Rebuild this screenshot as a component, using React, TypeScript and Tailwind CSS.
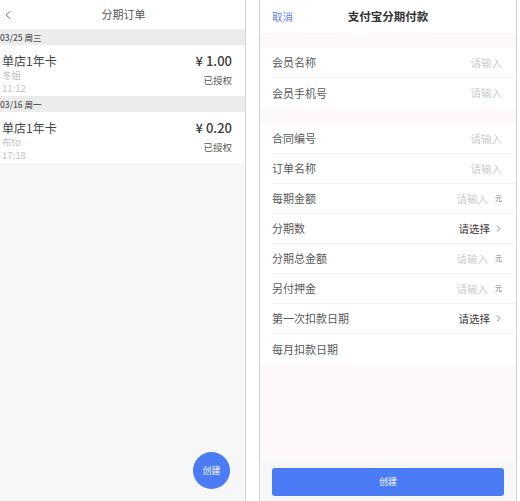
import { ChevronLeft, ChevronRight } from 'lucide-react';

const font = { fontFamily: '"Noto Sans CJK SC", "Noto Sans", sans-serif' };

interface Order {
    date: string;
    name: string;
    member: string;
    time: string;
    price: string;
}

const orders: Order[] = [
    { date: '03/25 周三', name: '单店1年卡', member: '冬姐', time: '11:12', price: '¥ 1.00' },
    { date: '03/16 周一', name: '单店1年卡', member: '布to', time: '17:18', price: '¥ 0.20' },
];

type Row = { label: string; kind: 'input' | 'yuan' | 'select' | 'none' };

const group1: Row[] = [
    { label: '会员名称', kind: 'input' },
    { label: '会员手机号', kind: 'input' },
];

const group2: Row[] = [
    { label: '合同编号', kind: 'input' },
    { label: '订单名称', kind: 'input' },
    { label: '每期金额', kind: 'yuan' },
    { label: '分期数', kind: 'select' },
    { label: '分期总金额', kind: 'yuan' },
    { label: '另付押金', kind: 'yuan' },
    { label: '第一次扣款日期', kind: 'select' },
    { label: '每月扣款日期', kind: 'none' },
];

function FormRow({ row, last }: { row: Row; last: boolean }) {
    return (
        <div className="pl-[12px] bg-white">
            <div className={`h-[30px] flex items-center justify-between pr-[14px] ${last ? '' : 'border-b border-[#f2f2f2]'}`}>
                <span className="text-[11px] text-[#5a5a5a]">{row.label}</span>
                {row.kind === 'input' && <span className="text-[10.5px] text-[#cbcbcb]">请输入</span>}
                {row.kind === 'yuan' && (
                    <span className="flex items-center gap-[7px]">
                        <span className="text-[10.5px] text-[#cbcbcb]">请输入</span>
                        <span className="text-[7px] text-[#777]">元</span>
                    </span>
                )}
                {row.kind === 'select' && (
                    <span className="flex items-center gap-[3px] -mr-[2px]">
                        <span className="text-[10.5px] text-[#3a3a3a]">请选择</span>
                        <ChevronRight className="w-[11px] h-[11px] text-[#666]" strokeWidth={1.6} />
                    </span>
                )}
            </div>
        </div>
    );
}

export default function App() {
    return (
        <div className="w-[520px] h-[501px] bg-white flex overflow-hidden" style={font}>
            {/* left: order list */}
            <div className="w-[246px] h-full flex flex-col bg-[#f7f7f7] border-r-[1.5px] border-[#d4d4d4]">
                <div className="h-[29px] bg-white flex items-center relative shrink-0">
                    <ChevronLeft className="absolute left-[1px] top-[8px] w-[14px] h-[14px] text-[#555]" strokeWidth={1.5} />
                    <span className="flex-1 text-center text-[11px] text-[#555] pl-[2px]">分期订单</span>
                </div>
                {orders.map((o) => (
                    <div key={o.date}>
                        <div className="h-[16px] bg-[#ececec] flex items-center text-[8.5px] font-medium text-[#555]">{o.date}</div>
                        <div className="h-[51px] bg-white pl-[2px] pr-[13px] pt-[7px] flex justify-between">
                            <div className="flex flex-col">
                                <span className="text-[12px] leading-[17px] text-[#444]">{o.name}</span>
                                <span className="text-[9.5px] leading-[12px] text-[#c2c2c2]">{o.member}</span>
                                <span className="text-[9.5px] leading-[14px] text-[#c2c2c2]">{o.time}</span>
                            </div>
                            <div className="flex flex-col items-end">
                                <span className="text-[13px] leading-[17px] font-medium text-[#3a3a3a]">{o.price}</span>
                                <span className="text-[9.5px] leading-[14px] mt-[4px] text-[#5a5a5a]">已授权</span>
                            </div>
                        </div>
                    </div>
                ))}
                <div className="flex-1 flex items-end justify-end pr-[15px] pb-[12px]">
                    <div className="w-[37px] h-[37px] rounded-full bg-[#4b7cf6] flex items-center justify-center text-[9px] text-white">创建</div>
                </div>
            </div>

            {/* right: form */}
            <div className="w-[13px] shrink-0" />
            <div className="w-[258px] h-full flex flex-col bg-[#fdf9f9] border-x-[1.5px] border-[#d4d4d4]">
                <div className="h-[33px] bg-white flex items-center relative shrink-0">
                    <span className="absolute left-[12px] text-[10.5px] text-[#5b82f2]">取消</span>
                    <span className="flex-1 text-center text-[11.5px] font-semibold text-[#333]">支付宝分期付款</span>
                </div>
                <div className="h-[15px] shrink-0" />
                {group1.map((r, i) => (
                    <FormRow key={r.label} row={r} last={i === group1.length - 1} />
                ))}
                <div className="h-[16px] shrink-0" />
                {group2.map((r, i) => (
                    <FormRow key={r.label} row={r} last={i === group2.length - 1} />
                ))}
                <div className="flex-1" />
                <div className="h-[41px] bg-[#f7f7f7] px-[12px] pt-[8px] shrink-0">
                    <div className="h-[28px] rounded-[3px] bg-[#4b7cf6] flex items-center justify-center text-[9px] text-white">创建</div>
                </div>
            </div>
            <div className="flex-1" />
        </div>
    );
}
